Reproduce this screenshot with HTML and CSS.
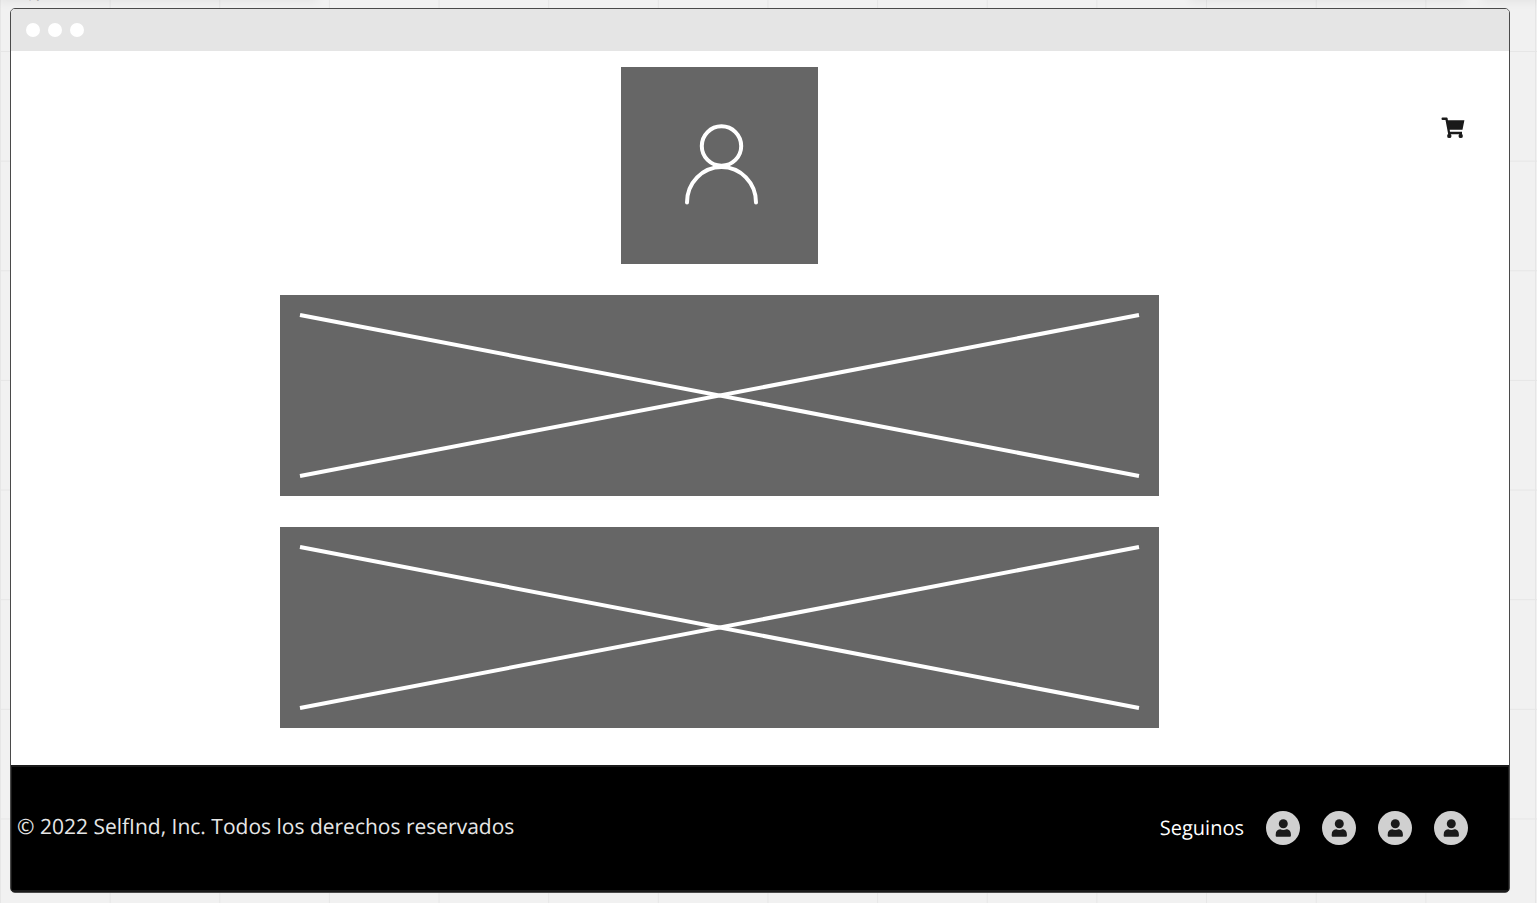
FILE: index.html
```html
<!DOCTYPE html>
<html lang="es">
<head>
<meta charset="utf-8">
<meta name="viewport" content="width=device-width, initial-scale=1">
<title>SelfInd</title>
<link rel="stylesheet" href="styles.css">
</head>
<body>
<svg class="sprite" aria-hidden="true">
  <symbol id="user" viewBox="0 0 34 34">
    <circle cx="17.300" cy="12.800" r="4.500"/>
    <path d="M9.700 25.800v-2.200c0-3.200 1.700-5.300 4.500-5.300 1.600 1 4.600 1 6.200 0 2.800 0 4.500 2.100 4.500 5.300v1.200q0 1-1 1H10.700q-1 0-1-1z"/>
  </symbol>
</svg>
<div class="toolbar-shadow toolbar-left"></div>
<div class="toolbar-shadow toolbar-right"></div>
<div class="toolbar-shadow toolbar-end"></div>
<span class="frame-label">Copy</span>
<div class="window">
  <div class="titlebar"><span class="dot"></span><span class="dot"></span><span class="dot"></span></div>
  <main class="content">
    <div class="avatar">
      <svg class="avatar-icon" viewBox="0 0 74 84" aria-label="Perfil" role="img">
        <circle cx="38.500" cy="22" r="19.700"/>
        <path d="M4 78.500a34.500 35.500 0 0 1 69 0"/>
      </svg>
    </div>
    <a class="cart" href="#" aria-label="Carrito">
      <svg class="cart-icon" viewBox="0 0 24 22">
        <path d="M1.500 0.500H5.700Q6.400.5 6.600 1.200L6.900 3.200H23.400L21.500 12.800H8.700L9 14.800H21V17.200H7.200L4.500 3H1.500Q.5 3 .5 1.800T1.500.5Z"/>
        <circle cx="8.300" cy="18.900" r="2.200"/>
        <circle cx="19.700" cy="18.900" r="2.200"/>
      </svg>
    </a>
    <div class="placeholder">
      <svg class="cross" viewBox="0 0 840 162" preserveAspectRatio="none" aria-hidden="true"><path d="M0 0L840 162M0 162L840 0"/></svg>
    </div>
    <div class="placeholder">
      <svg class="cross" viewBox="0 0 840 162" preserveAspectRatio="none" aria-hidden="true"><path d="M0 0L840 162M0 162L840 0"/></svg>
    </div>
  </main>
  <footer class="footer">
    <p class="copyright">© 2022 SelfInd, Inc. Todos los derechos reservados</p>
    <nav class="social" aria-label="Seguinos">
      <span class="follow">Seguinos</span>
      <a class="social-link" href="#" aria-label="Perfil 1"><svg class="social-icon"><use href="#user"/></svg></a>
      <a class="social-link" href="#" aria-label="Perfil 2"><svg class="social-icon"><use href="#user"/></svg></a>
      <a class="social-link" href="#" aria-label="Perfil 3"><svg class="social-icon"><use href="#user"/></svg></a>
      <a class="social-link" href="#" aria-label="Perfil 4"><svg class="social-icon"><use href="#user"/></svg></a>
    </nav>
  </footer>
</div>
</body>
</html>
```

FILE: styles.css
```css
* { box-sizing: border-box; }

body {
  --cell: calc((100vw - 2px) / 14);
  display: flex;
  min-height: 100vh;
  margin: 0;
  padding: 8px 27px 10px 10px;
  font-family: "Open Sans", "Noto Sans", sans-serif;
  text-rendering: geometricPrecision;
  background-color: #f1f1f1;
  background-image:
    linear-gradient(to right, #e6e6e6 1px, transparent 1px),
    linear-gradient(to bottom, #e6e6e6 1px, transparent 1px);
  background-size: var(--cell) var(--cell);
  background-position: 0 51px;
  overflow-x: hidden;
}

.sprite { position: absolute; width: 0; height: 0; }

.toolbar-shadow {
  position: absolute;
  top: -10px;
  height: 8px;
  box-shadow: 0 2px 10px 2px rgba(0, 0, 0, 0.06);
}
.toolbar-left { left: 0; width: 316px; }
.toolbar-right { left: 1192px; width: 272px; }
.toolbar-end { left: 1484px; right: 0; }

.frame-label {
  position: absolute;
  top: -15px;
  left: 11px;
  font-size: 14px;
  line-height: 16px;
  color: #555;
}

.window {
  position: relative;
  display: flex;
  flex: 1;
  flex-direction: column;
  border: 1px solid #4a4a4a;
  border-radius: 5px;
  background: #fff;
  overflow: hidden;
}

.titlebar {
  display: flex;
  align-items: center;
  gap: 8px;
  height: 42px;
  padding: 0 15px 1px;
  background: #e5e5e5;
}
.dot { width: 14px; height: 14px; border-radius: 50%; background: #fff; }

.content {
  display: grid;
  flex: 1;
  grid-template-columns: 269fr 879fr 350fr;
  align-content: start;
  row-gap: 31px;
  padding: 16px 0 36px;
}

.avatar {
  display: grid;
  grid-column: 2;
  justify-self: center;
  place-items: center;
  width: 197px;
  height: 197px;
  background: #666;
}
.avatar-icon {
  width: 74px;
  height: 84px;
  overflow: visible;
  fill: none;
  stroke: #fff;
  stroke-width: 4;
  stroke-linecap: round;
}

.cart { grid-column: 3; justify-self: end; padding: 50px 44px 0 0; }
.cart-icon { display: block; width: 24px; height: 22px; fill: #1a1a1a; }

.placeholder {
  grid-column: 2;
  height: 201px;
  padding: 20px;
  background: #666;
}
.cross {
  display: block;
  width: 100%;
  height: 100%;
  overflow: visible;
  fill: none;
  stroke: #fff;
  stroke-width: 4;
}
.cross path { vector-effect: non-scaling-stroke; }

.footer {
  display: flex;
  align-items: center;
  justify-content: space-between;
  height: 127px;
  padding: 0 40px 2px 5px;
  border: 2px solid #1a1a1a;
  border-width: 2px 1px;
  background: #000;
}
.copyright { margin: 0; padding-bottom: 2px; font-size: 21px; line-height: 28px; color: #e6e6e6; }
.social { display: flex; align-items: center; gap: 22px; }
.follow { font-size: 20px; line-height: 28px; color: #fff; }
.social-link { width: 34px; height: 34px; border-radius: 50%; background: #d0d0d0; }
.social-icon { display: block; width: 34px; height: 34px; fill: #1a1a1a; }
```
